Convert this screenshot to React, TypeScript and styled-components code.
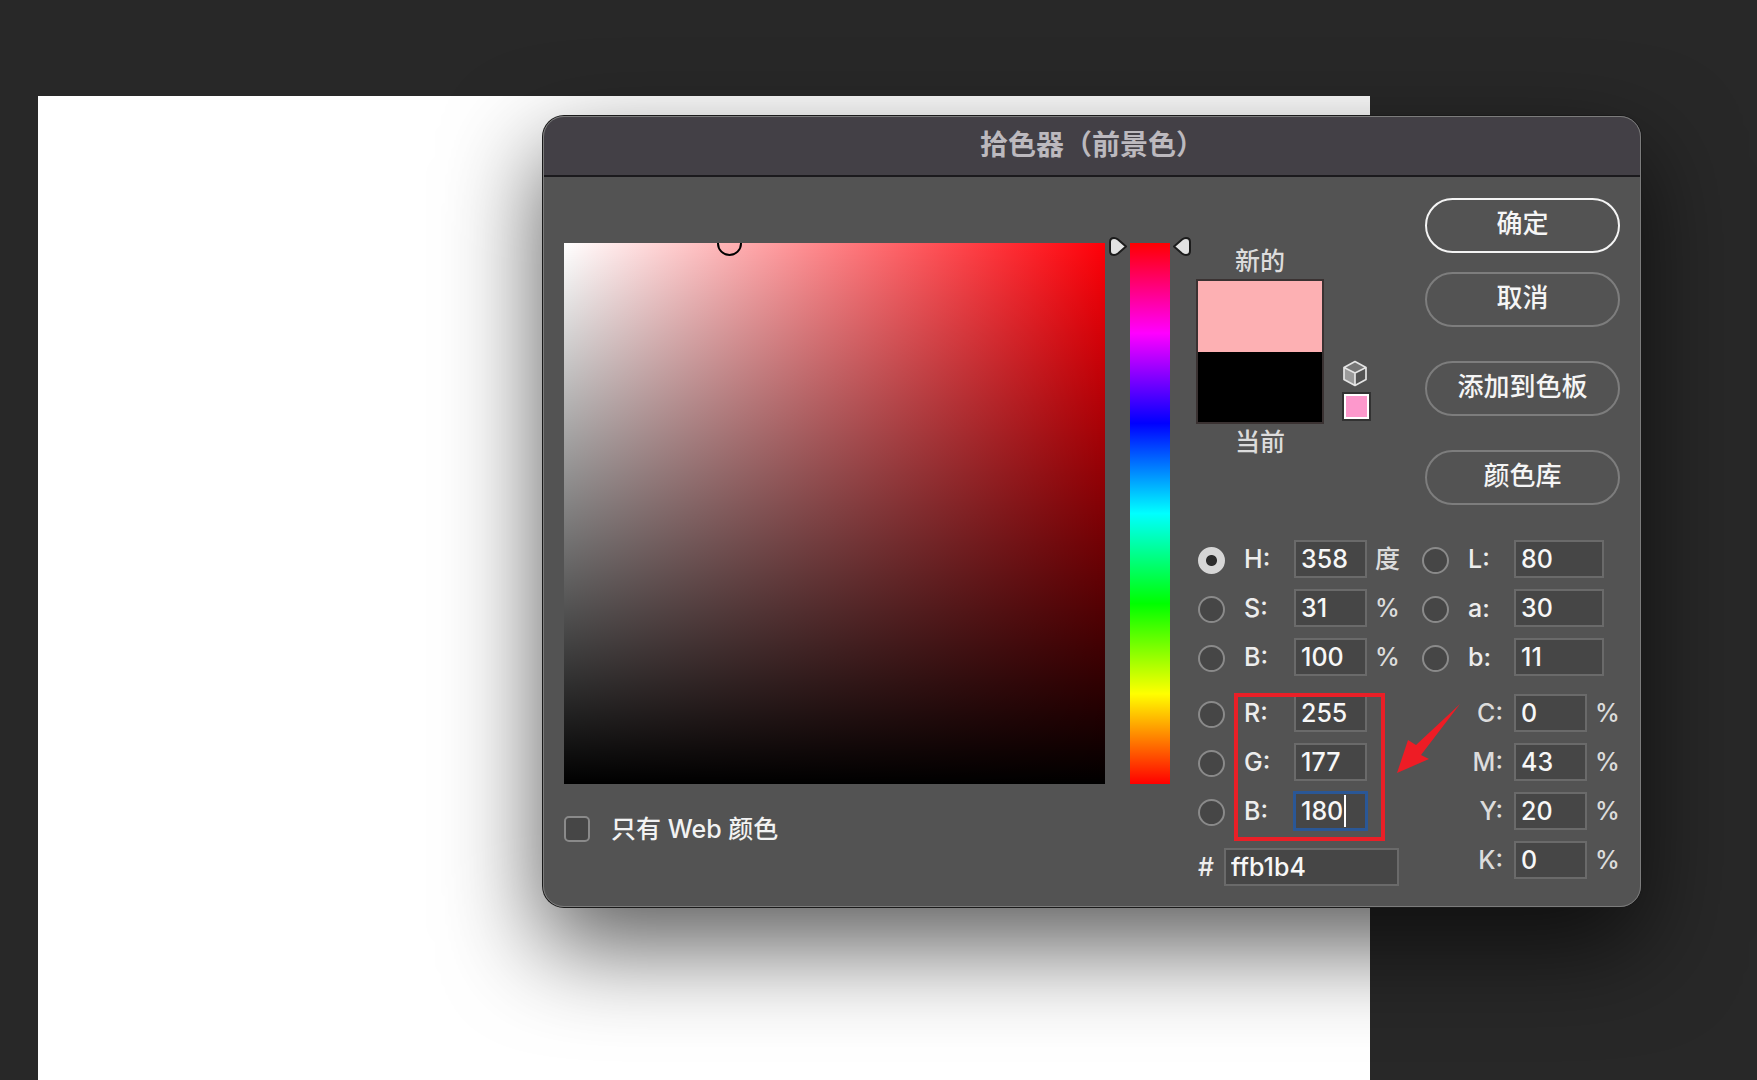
import React, { useId, useState } from "react";
import styled, { createGlobalStyle } from "styled-components";

const GlobalStyle = createGlobalStyle`
  *, *::before, *::after { box-sizing: border-box; }
  html, body { margin: 0; background: #282828; }
  body, button, input {
    font-family: Inter, "Noto Sans CJK SC", "Liberation Sans", sans-serif;
    font-size: 25px;
    font-weight: 500;
    line-height: 36px;
  }
`;

const Workspace = styled.main`
  position: relative;
  display: flex;
  min-height: 100vh;
  padding: 96px 387px 0 38px;
  background: #282828;
  overflow: hidden;
`;

const Artboard = styled.div`
  flex: 1;
  background: #fff;
`;

const Dialog = styled.section`
  position: absolute;
  top: 116px;
  left: 543px;
  width: 1098px;
  border-radius: 21px;
  background: #535353;
  color: #f2f2f2;
  box-shadow: 0 0 0 1px #1a1a1a, 0 38px 96px 2px rgba(0, 0, 0, 0.64);

  &::after {
    content: "";
    position: absolute;
    inset: 0;
    border: 1px solid #7c7c7c;
    border-radius: 21px;
    pointer-events: none;
  }
`;

const TitleBar = styled.header`
  display: flex;
  justify-content: center;
  height: 61px;
  padding-top: 11px;
  border-bottom: 2px solid #1b1a1d;
  border-radius: 21px 21px 0 0;
  background: #434046;
`;

const Title = styled.h1`
  margin: 0;
  color: #bcb9be;
  font-size: 28px;
  font-weight: 700;
  line-height: 36px;
`;

const Body = styled.form`
  display: flex;
  gap: 5px;
  padding: 0 21px 21px 21px;
`;

const PickerColumn = styled.div`
  display: flex;
  flex-direction: column;
  gap: 27px;
  padding-top: 60px;
`;

const PickerRow = styled.div`
  display: flex;
  gap: 4px;
`;

const ColorField = styled.div`
  position: relative;
  width: 541px;
  height: 541px;
  margin-top: 6px;
  overflow: hidden;
  background:
    linear-gradient(to top, #000, transparent),
    linear-gradient(to right, #fff, #ff0008);
`;

const FieldMarker = styled.span`
  position: absolute;
  top: -12px;
  left: 153px;
  width: 25px;
  height: 25px;
  border: 2px solid #000;
  border-radius: 50%;
`;

const HueGroup = styled.div`
  display: flex;
  align-items: flex-start;
  gap: 3px;
`;

const HueSlider = styled.input`
  appearance: none;
  writing-mode: vertical-lr;
  width: 40px;
  height: 541px;
  margin: 6px 0 0;
  background: linear-gradient(#f00, #f0f, #00f, #0ff, #0f0, #ff0, #f00);

  &::-webkit-slider-thumb {
    appearance: none;
    width: 40px;
    height: 2px;
    background: transparent;
  }
`;

const CheckLabel = styled.label`
  display: flex;
  align-items: center;
  gap: 21px;
`;

const CheckBox = styled.input`
  appearance: none;
  width: 26px;
  height: 26px;
  margin: 0;
  border: 2px solid #8a8a8a;
  border-radius: 5px;
  background: #464646;
`;

const ControlColumn = styled.div`
  display: flex;
  flex: 1;
  flex-direction: column;
  gap: 35px;
  padding-top: 21px;
`;

const ControlTop = styled.div`
  display: flex;
  justify-content: space-between;
`;

const Preview = styled.div`
  display: flex;
  gap: 18px;
  padding-top: 45px;
`;

const Comparison = styled.div`
  display: flex;
  flex-direction: column;
  width: 128px;
  text-align: center;
  color: #dcdcdc;
`;

const Swatches = styled.div`
  display: grid;
  grid-template-rows: 1fr 1fr;
  height: 145px;
  border: 2px solid #3a3232;
`;

const Swatch = styled.div<{ $color: string }>`
  background: ${(p) => p.$color};
`;

const WebSafe = styled.div`
  display: flex;
  flex-direction: column;
  gap: 5px;
  padding-top: 117px;
`;

const WebSwatch = styled.button`
  width: 29px;
  height: 29px;
  padding: 0;
  border: 2px solid #323232;
  background: #fd98cc;
  box-shadow: inset 0 0 0 2px #fff;
`;

const Actions = styled.div`
  display: flex;
  flex-direction: column;
  gap: 34px;
  width: 195px;
`;

const ActionPair = styled.div`
  display: flex;
  flex-direction: column;
  gap: 19px;
`;

const PillButton = styled.button<{ $primary?: boolean }>`
  height: 55px;
  padding: 0 0 4px;
  border: 2px solid ${(p) => (p.$primary ? "#f4f4f4" : "#7d7d7d")};
  border-radius: 28px;
  background: transparent;
  color: #f5f5f5;
  font-size: 26px;
`;

const Channels = styled.div`
  display: grid;
  grid-template-columns: 226px 1fr;
`;

const ChannelColumn = styled.div`
  display: flex;
  flex-direction: column;
  gap: 18px;
`;

const ChannelGroup = styled.div`
  position: relative;
  display: flex;
  flex-direction: column;
  gap: 11px;
`;

const Row = styled.div<{ $indent?: number }>`
  display: flex;
  align-items: center;
  height: 38px;
  padding-left: ${(p) => p.$indent ?? 0}px;
`;

const Radio = styled.input`
  appearance: none;
  flex: none;
  width: 27px;
  height: 27px;
  margin: 3px 19px 0 0;
  border: 2px solid #8a8a8a;
  border-radius: 50%;
  background: #464646;

  &:checked {
    border-color: #d6d6d6;
    background: radial-gradient(circle, #2c2c2c 5px, #d6d6d6 6px);
  }
`;

const ChannelLabel = styled.label<{ $width: number; $end?: boolean }>`
  width: ${(p) => p.$width}px;
  padding-right: ${(p) => (p.$end ? 11 : 0)}px;
  text-align: ${(p) => (p.$end ? "right" : "left")};
  color: ${(p) => (p.$end ? "#dcdcdc" : "#ededed")};
`;

const InputFrame = styled.span`
  position: relative;
  display: flex;
`;

const ValueInput = styled.input<{ $width: number; $active?: boolean }>`
  width: ${(p) => p.$width}px;
  height: 38px;
  padding: 0 5px;
  border: 2px solid ${(p) => (p.$active ? "#2a5796" : "#6a6a6a")};
  border-radius: 0;
  outline: ${(p) => (p.$active ? "1px solid #2a5796" : "none")};
  background: #464646;
  color: #f7f7f7;
`;

const Caret = styled.span`
  position: absolute;
  top: 3px;
  left: 50px;
  width: 2px;
  height: 32px;
  background: #fff;
`;

const Unit = styled.span`
  padding-left: 8px;
  color: #dcdcdc;
`;

const Highlight = styled.div`
  position: absolute;
  top: -1px;
  left: 38px;
  width: 151px;
  height: 148px;
  border: 4px solid #ea1f27;
  pointer-events: none;
`;

const ArrowDrawing = styled.svg`
  position: absolute;
  top: 8px;
  left: 200px;
  z-index: 1;
  pointer-events: none;
`;

type ChannelProps = {
  name: string;
  value: string;
  unit?: string;
  radio?: boolean;
  checked?: boolean;
  active?: boolean;
  indent?: number;
  labelWidth: number;
  inputWidth?: number;
};

function Channel({ name, value, unit, radio, checked, active, indent, labelWidth, inputWidth = 73 }: ChannelProps) {
  const id = useId();
  const [text, setText] = useState(value);
  return (
    <Row $indent={indent}>
      {radio && <Radio type="radio" name="channel" defaultChecked={checked} aria-label={name} />}
      <ChannelLabel htmlFor={id} $width={labelWidth} $end={!radio}>
        {name}:
      </ChannelLabel>
      <InputFrame>
        <ValueInput id={id} $width={inputWidth} $active={active} value={text} onChange={(e) => setText(e.target.value)} />
        {active && <Caret />}
      </InputFrame>
      {unit && <Unit>{unit}</Unit>}
    </Row>
  );
}

function HueMarker({ flipped }: { flipped?: boolean }) {
  return (
    <svg width="18" height="19" viewBox="0 0 18 19" aria-hidden="true">
      <path
        d={
          flipped
            ? "M1 9.5 L9 2.5 Q11 1 13 1 Q17 1 17 5 V14 Q17 18 13 18 Q11 18 9 16.5 Z"
            : "M17 9.5 L9 2.5 Q7 1 5 1 Q1 1 1 5 V14 Q1 18 5 18 Q7 18 9 16.5 Z"
        }
        fill="#e2e2e2"
        stroke="#1c1c1c"
        strokeWidth="2"
        strokeLinejoin="round"
      />
    </svg>
  );
}

function CubeIcon() {
  return (
    <svg width="26" height="27" viewBox="0 0 26 27" aria-hidden="true">
      <path d="M2 7.5 L13 13 V26 L2 19.5 Z" fill="#9b9b9b" />
      <path d="M2 7.5 L13 2 L24 7.5 L13 13 Z" fill="#767676" />
      <path
        d="M13 1.5 L24 7.5 V19.5 L13 25.5 L2 19.5 V7.5 Z M2 7.5 L13 13 L24 7.5 M13 13 V25.5"
        fill="none"
        stroke="#e4e4e4"
        strokeWidth="1.7"
        strokeLinejoin="round"
      />
    </svg>
  );
}

export default function App() {
  const hexId = useId();
  const [hex, setHex] = useState("ffb1b4");
  return (
    <Workspace>
      <GlobalStyle />
      <Artboard />
      <Dialog role="dialog" aria-labelledby="picker-title">
        <TitleBar>
          <Title id="picker-title">拾色器（前景色）</Title>
        </TitleBar>
        <Body onSubmit={(e) => e.preventDefault()}>
          <PickerColumn>
            <PickerRow>
              <ColorField>
                <FieldMarker />
              </ColorField>
              <HueGroup>
                <HueMarker />
                <HueSlider type="range" min="0" max="360" defaultValue="358" aria-label="H" />
                <HueMarker flipped />
              </HueGroup>
            </PickerRow>
            <CheckLabel>
              <CheckBox type="checkbox" />
              只有 Web 颜色
            </CheckLabel>
          </PickerColumn>

          <ControlColumn>
            <ControlTop>
              <Preview>
                <Comparison>
                  <span>新的</span>
                  <Swatches>
                    <Swatch $color="#fdb0b3" />
                    <Swatch $color="#000" />
                  </Swatches>
                  <span>当前</span>
                </Comparison>
                <WebSafe>
                  <CubeIcon />
                  <WebSwatch type="button" aria-label="Web" />
                </WebSafe>
              </Preview>
              <Actions>
                <ActionPair>
                  <PillButton type="submit" $primary>确定</PillButton>
                  <PillButton type="button">取消</PillButton>
                </ActionPair>
                <PillButton type="button">添加到色板</PillButton>
                <PillButton type="button">颜色库</PillButton>
              </Actions>
            </ControlTop>

            <Channels>
              <ChannelColumn>
                <ChannelGroup>
                  <Channel radio checked indent={2} labelWidth={50} name="H" value="358" unit="度" />
                  <Channel radio indent={2} labelWidth={50} name="S" value="31" unit="%" />
                  <Channel radio indent={2} labelWidth={50} name="B" value="100" unit="%" />
                </ChannelGroup>
                <ChannelGroup>
                  <Channel radio indent={2} labelWidth={50} name="R" value="255" />
                  <Channel radio indent={2} labelWidth={50} name="G" value="177" />
                  <Channel radio indent={2} labelWidth={50} name="B" value="180" active />
                  <Highlight />
                  <ArrowDrawing width="66" height="74" viewBox="0 0 66 74" aria-hidden="true">
                    <path d="M64 2 L25 53 L33 57 L1 71 L12 38 L20 43 Z" fill="#ee1c25" />
                  </ArrowDrawing>
                </ChannelGroup>
                <Row $indent={2}>
                  <ChannelLabel htmlFor={hexId} $width={26}>#</ChannelLabel>
                  <ValueInput id={hexId} $width={175} value={hex} onChange={(e) => setHex(e.target.value)} />
                </Row>
              </ChannelColumn>
              <ChannelColumn>
                <ChannelGroup>
                  <Channel radio labelWidth={46} inputWidth={90} name="L" value="80" />
                  <Channel radio labelWidth={46} inputWidth={90} name="a" value="30" />
                  <Channel radio labelWidth={46} inputWidth={90} name="b" value="11" />
                </ChannelGroup>
                <ChannelGroup>
                  <Channel labelWidth={92} name="C" value="0" unit="%" />
                  <Channel labelWidth={92} name="M" value="43" unit="%" />
                  <Channel labelWidth={92} name="Y" value="20" unit="%" />
                  <Channel labelWidth={92} name="K" value="0" unit="%" />
                </ChannelGroup>
              </ChannelColumn>
            </Channels>
          </ControlColumn>
        </Body>
      </Dialog>
    </Workspace>
  );
}
